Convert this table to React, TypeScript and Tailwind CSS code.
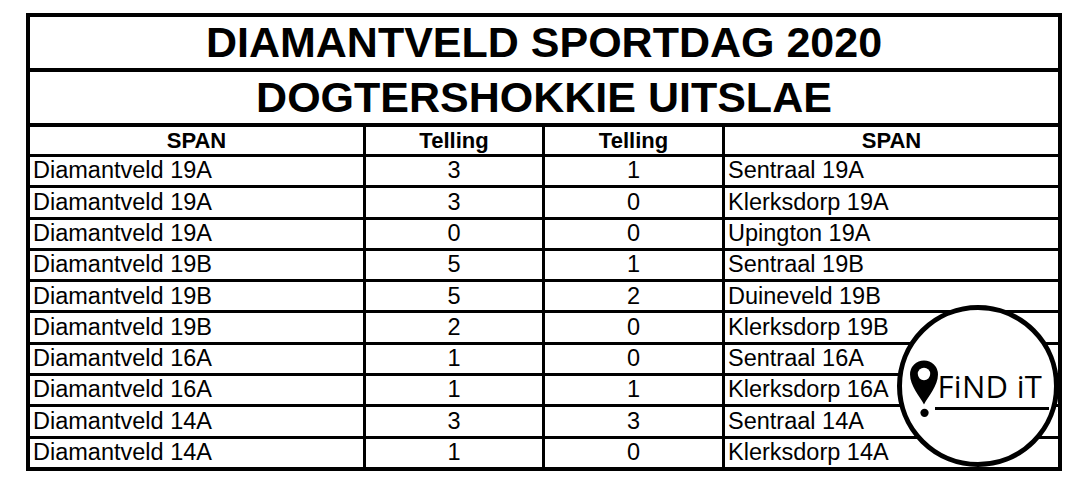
const results = [
  ["Diamantveld 19A", "3", "1", "Sentraal 19A"],
  ["Diamantveld 19A", "3", "0", "Klerksdorp 19A"],
  ["Diamantveld 19A", "0", "0", "Upington 19A"],
  ["Diamantveld 19B", "5", "1", "Sentraal 19B"],
  ["Diamantveld 19B", "5", "2", "Duineveld 19B"],
  ["Diamantveld 19B", "2", "0", "Klerksdorp 19B"],
  ["Diamantveld 16A", "1", "0", "Sentraal 16A"],
  ["Diamantveld 16A", "1", "1", "Klerksdorp 16A"],
  ["Diamantveld 14A", "3", "3", "Sentraal 14A"],
  ["Diamantveld 14A", "1", "0", "Klerksdorp 14A"],
];

function FindItBadge() {
  return (
    <div className="absolute left-[867px] top-[288px] flex h-[162px] w-[162px] items-center justify-center rounded-full border-[5px] border-black bg-white">
      <div className="ml-[1px] mt-[6px] flex items-start">
        <svg width="30" height="58" viewBox="0 0 28 56" className="shrink-0">
          <path
            d="M14 43 C10 35 0.5 25 0.5 14 A13.5 13.5 0 0 1 27.5 14 C27.5 25 18 35 14 43 Z"
            fill="black"
          />
          <circle cx="14" cy="13.5" r="6" fill="white" />
          <circle cx="14.5" cy="51" r="4" fill="black" />
        </svg>
        <div className="-ml-[1px] mt-[10px] flex flex-col">
          <span className="font-['Open_Sans',sans-serif] text-[31px] font-normal leading-[32px] tracking-[0.3px] text-black">
            FiND iT
          </span>
          <div className="-ml-[3px] mt-[5px] h-[3px] w-[114px] bg-black" />
        </div>
      </div>
    </div>
  );
}

export default function App() {
  return (
    <div className="h-[493px] w-[1080px] bg-white pl-[26px] pt-[13px] font-['Liberation_Sans',Arial,sans-serif] text-black">
      <div className="relative w-[1036px] border-4 border-black">
        {/* Titles */}
        <div className="flex h-[55px] items-center justify-center border-b-4 border-black text-[43px] font-bold leading-none">
          DIAMANTVELD SPORTDAG 2020
        </div>
        <div className="flex h-[55px] items-center justify-center border-b-4 border-black text-[43px] font-bold leading-none">
          DOGTERSHOKKIE UITSLAE
        </div>

        {/* Header */}
        <div className="grid h-[30px] grid-cols-[336px_179px_180px_333px] border-b-[3px] border-black text-[22px] font-bold leading-none">
          <div className="flex items-center justify-center border-r-[3px] border-black">SPAN</div>
          <div className="flex items-center justify-center border-r-[3px] border-black">Telling</div>
          <div className="flex items-center justify-center border-r-[3px] border-black">Telling</div>
          <div className="flex items-center justify-center">SPAN</div>
        </div>

        {/* Rows */}
        {results.map((r, i) => (
          <div
            key={i}
            className={
              i < results.length - 1
                ? "grid h-[31.3px] grid-cols-[336px_179px_180px_333px] border-b-[3px] border-black text-[23.5px] leading-none"
                : "grid h-[28.3px] grid-cols-[336px_179px_180px_333px] text-[23.5px] leading-none"
            }
          >
            <div className="flex items-center border-r-[3px] border-black pl-[3px]">{r[0]}</div>
            <div className="flex items-center justify-center border-r-[3px] border-black">{r[1]}</div>
            <div className="flex items-center justify-center border-r-[3px] border-black">{r[2]}</div>
            <div className="flex items-center pl-[3px]">{r[3]}</div>
          </div>
        ))}

        <FindItBadge />
      </div>
    </div>
  );
}
